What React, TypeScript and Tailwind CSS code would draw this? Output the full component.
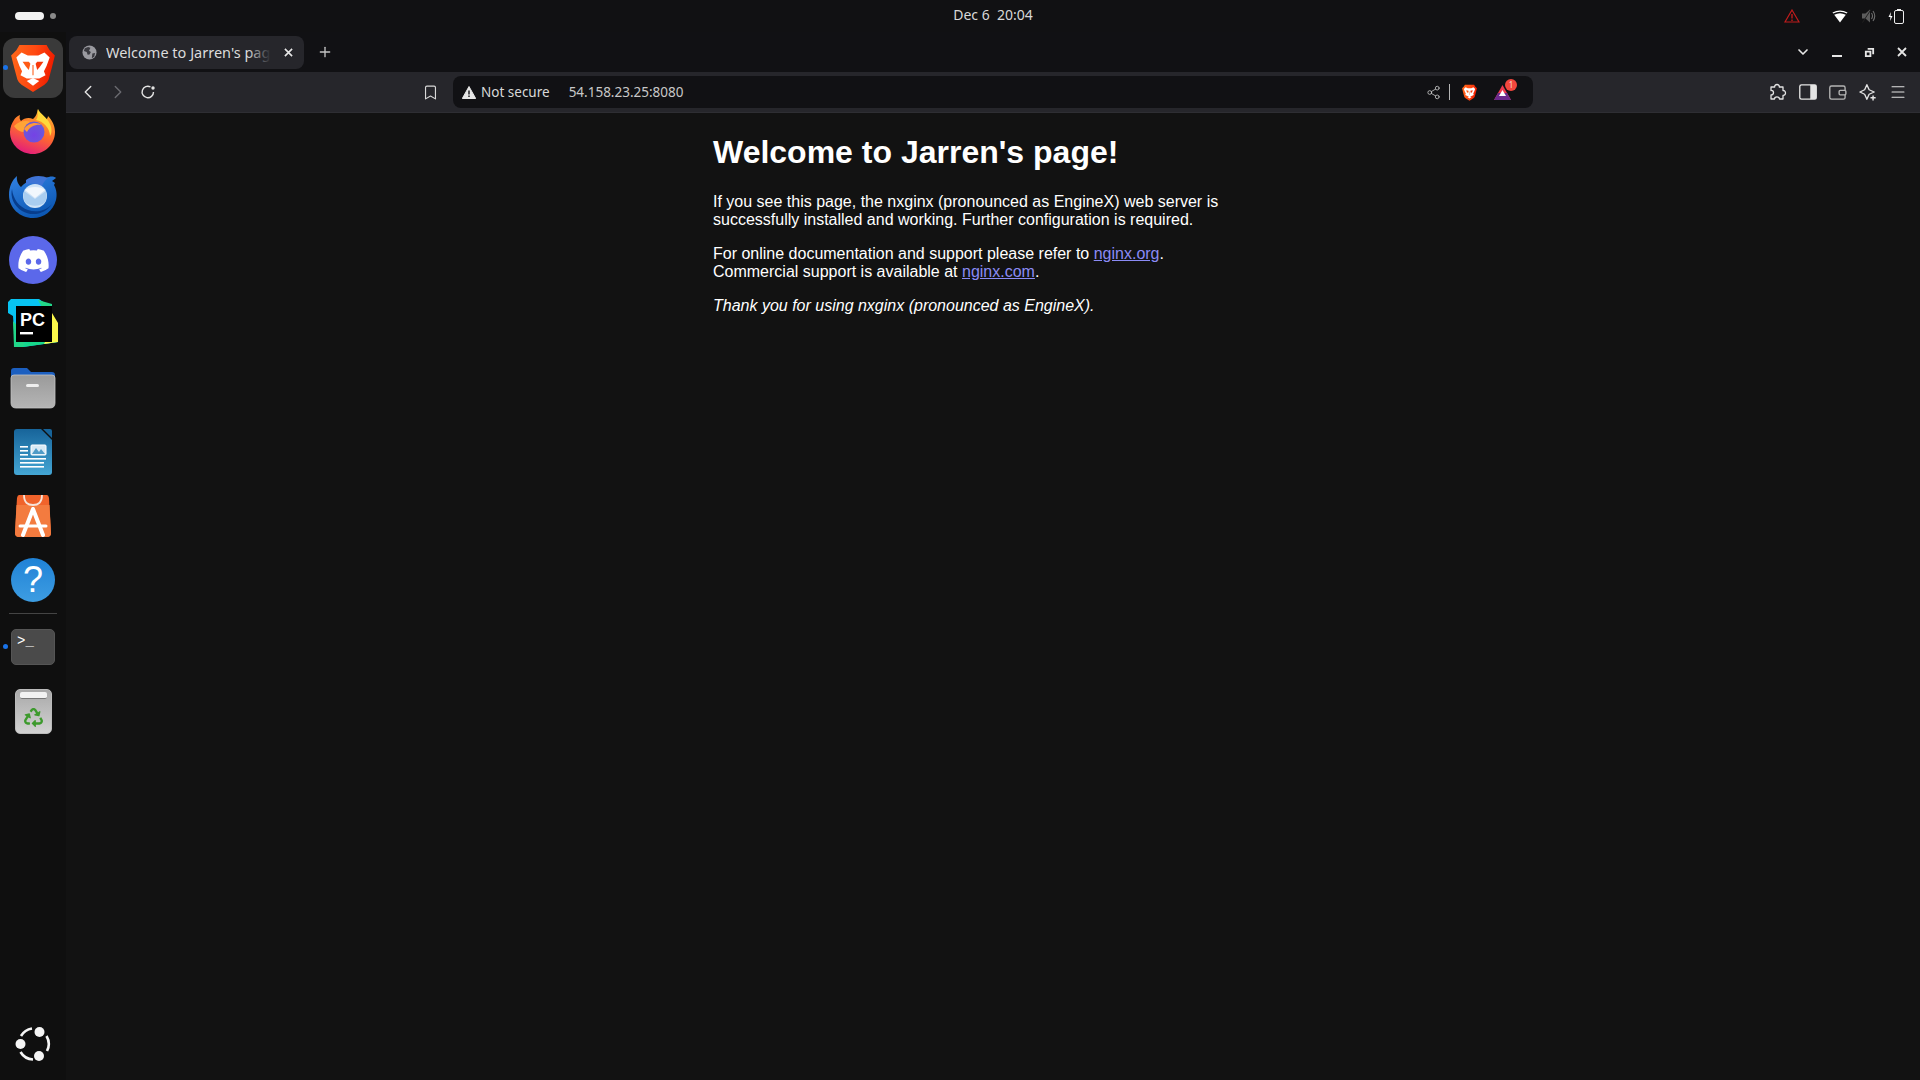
import { FaDiscord, FaRecycle } from 'react-icons/fa';
import { ChevronLeft, ChevronRight, Bookmark, Share2, Menu, Plus, ChevronDown } from 'lucide-react';

const uiFont = "font-['Noto_Sans',sans-serif]";

function BraveIcon({ size = 50 }: { size?: number }) {
  return (
    <svg width={size} height={size} viewBox="0 0 48 48">
      <defs>
        <linearGradient id="braveFill" x1="0" y1="0" x2="1" y2="0.2">
          <stop offset="0" stopColor="#ff6a1a" />
          <stop offset="0.55" stopColor="#ff4a12" />
          <stop offset="1" stopColor="#f01e00" />
        </linearGradient>
      </defs>
      <path d="M11 2H37L40 7L45 12L42 24L39 35Q38 38 35 40L24 47L13 40Q10 38 9 35L6 24L3 12L8 7Z" fill="url(#braveFill)" />
      <path d="M13 9L19 12H29L35 9L40 14L37 22L34.500 27L36 31L30 34H18L12 31L13.500 27L11 22L8 14Z" fill="#fff" />
      <path d="M14 18L20 18L21.500 20L20 26L17.500 23Z" fill="#ff5a14" />
      <path d="M34 18L28 18L26.500 20L28 26L30.500 23Z" fill="#f8380a" />
      <path d="M23.500 21H24.500V31H23.500Z" fill="#ff5a14" />
      <path d="M18 36.500L24 33.500L30 36.500L24 41Z" fill="#fff" />
    </svg>
  );
}

function FirefoxIcon() {
  return (
    <svg width={48} height={48} viewBox="0 0 48 48">
      <defs>
        <linearGradient id="ffBody" x1="0.7" y1="0" x2="0.3" y2="1">
          <stop offset="0" stopColor="#ffb52e" />
          <stop offset="0.5" stopColor="#ff6b2c" />
          <stop offset="1" stopColor="#e2197f" />
        </linearGradient>
        <radialGradient id="ffGlobe" cx="0.5" cy="0.65" r="0.6">
          <stop offset="0" stopColor="#7542e5" />
          <stop offset="1" stopColor="#6a5cd8" />
        </radialGradient>
      </defs>
      <path d="M29 1C29 6 33 8 37 12C39 10 39 8 39 8C44 13 46 19 46 24C46 36 36 46 24 46C12 46 1 37 1 24C1 19 3 15 5 12C6 10 8 8 11 7C10 10 11 12 12 13C15 10 20 9 24 11C28 8 28 4 29 1Z" fill="url(#ffBody)" />
      <path d="M29 1C31 6 38 9 41 16C43 20 43 25 41 28C41 20 34 13 27 12C30 8 28 4 29 1Z" fill="#ffd93b" />
      <path d="M5 18C10 13 16 12 22 14C17 16 16 20 16 24C11 24 8 22 5 18Z" fill="#ffa436" />
      <circle cx="25" cy="24" r="10.5" fill="url(#ffGlobe)" />
      <path d="M15 21C19 15 27 13 33 17C27 16 21 18 18 24Z" fill="#ff9a3a" />
    </svg>
  );
}

function ThunderbirdIcon() {
  return (
    <svg width={50} height={50} viewBox="0 0 50 50">
      <defs>
        <linearGradient id="tbBody" x1="0.2" y1="0" x2="0.7" y2="1">
          <stop offset="0" stopColor="#2f7fe0" />
          <stop offset="1" stopColor="#0a55b0" />
        </linearGradient>
      </defs>
      <path d="M9 5C8 10 11 14 13 16C20 8 30 5 38 7C42 5 46 5 48 7L44 10L47 12L46 14C49 19 49 25 48 29C45 40 36 47 25 47C12 47 1 37 1 24C1 16 4 9 9 5Z" fill="url(#tbBody)" />
      <path d="M18 9C24 4 34 4 40 7C36 10 33 15 34 18C30 13 24 11 18 14Z" fill="#3f74d6" />
      <path d="M4 18C5 28 11 36 20 39C28 42 38 40 44 33C38 43 24 46 14 40C6 35 2 26 4 18Z" fill="#073d8c" />
      <circle cx="27" cy="25" r="12" fill="#cfe3f7" />
      <path d="M16 20L27 28L38 20C39 23 39 27 37 31C33 36 21 36 17 31C15 28 15 23 16 20Z" fill="#a9cdf0" />
      <path d="M17 19C21 15 33 15 37 19L27 27Z" fill="#f2f7fd" />
    </svg>
  );
}

function PyCharmIcon() {
  return (
    <svg width={50} height={50} viewBox="0 0 50 50">
      <defs>
        <linearGradient id="pcA" x1="0" y1="0" x2="1" y2="1">
          <stop offset="0" stopColor="#07c3f2" />
          <stop offset="0.5" stopColor="#14d98a" />
          <stop offset="1" stopColor="#21d789" />
        </linearGradient>
      </defs>
      <path d="M3 0H31L38 5H44V17L50 25V43L15 48H7L5 17L0 14V3Z" fill="#07c3f2" />
      <path d="M5 22L22 40L15 48H6Z" fill="#21d789" />
      <path d="M22 30L50 25V43L15 48Z" fill="url(#pcA)" />
      <path d="M44 14L50 24V43L36 45L44 30Z" fill="#fcf84a" />
      <path d="M30 1L44 5V17L36 12Z" fill="#21d789" />
      <rect x="8" y="7" width="36" height="36" fill="#000" />
      <text x="12" y="27" fontFamily="'Liberation Sans',sans-serif" fontWeight="700" fontSize="18" fill="#fff">PC</text>
      <rect x="12" y="33" width="13" height="2.4" fill="#fff" />
    </svg>
  );
}

function FilesIcon() {
  return (
    <svg width={46} height={42} viewBox="0 0 46 42">
      <defs>
        <linearGradient id="filesBody" x1="0" y1="0" x2="0" y2="1">
          <stop offset="0" stopColor="#9a9a9a" />
          <stop offset="1" stopColor="#b5b5b5" />
        </linearGradient>
      </defs>
      <path d="M1 4Q1 1 4 1H17L21 5H42Q45 5 45 8V20H1Z" fill="#1c5fc0" />
      <path d="M1 11Q1 8 4 8H42Q45 8 45 11V36Q45 41 40 41H6Q1 41 1 36Z" fill="url(#filesBody)" stroke="#c4c4c4" strokeWidth="0.8" />
      <rect x="16" y="17" width="13" height="3" rx="1.5" fill="#eee" />
    </svg>
  );
}

function WriterIcon() {
  return (
    <svg width={38} height={46} viewBox="0 0 38 46">
      <defs>
        <linearGradient id="writerBody" x1="0" y1="0" x2="0" y2="1">
          <stop offset="0" stopColor="#17649a" />
          <stop offset="1" stopColor="#44a6d4" />
        </linearGradient>
      </defs>
      <path d="M3 0H27L38 11V43Q38 46 35 46H3Q0 46 0 43V3Q0 0 3 0Z" fill="url(#writerBody)" />
      <path d="M29 0H36Q38 0 38 2V9Z" fill="#17649a" />
      <g fill="#fff">
        <rect x="6" y="17" width="8" height="1.6" />
        <rect x="6" y="21" width="8" height="1.6" />
        <rect x="6" y="25" width="8" height="1.6" />
        <rect x="6" y="29" width="26" height="1.6" />
        <rect x="6" y="33" width="24" height="1.6" />
        <rect x="6" y="37" width="24" height="1.6" />
      </g>
      <rect x="17" y="16" width="15" height="10" rx="1" fill="#d7e9f4" stroke="#fff" strokeWidth="1" />
      <path d="M18 25L22 19L25 23L27 20L31 25Z" fill="#4f9bc7" />
    </svg>
  );
}

function StoreIcon() {
  return (
    <svg width={36} height={42} viewBox="0 0 36 42">
      <path d="M4 0H32Q33.500 0 34 3L36 38Q36 42 32 42H4Q0 42 0 38L2 3Q2.500 0 4 0Z" fill="#f0632b" />
      <path d="M1.500 10H34.500L36 38Q36 42 32 42H4Q0 42 0 38Z" fill="#f37b3f" />
      <path d="M9 0C9 8 13 10 18 10C23 10 27 8 27 0" fill="none" stroke="#f6e3d8" strokeWidth="1.800" />
      <path d="M18 14L8 40M18 14L28 40" stroke="#fff" strokeWidth="4" strokeLinecap="round" fill="none" />
      <path d="M5 31H31" stroke="#fff" strokeWidth="3" strokeLinecap="round" />
    </svg>
  );
}

function TerminalIcon() {
  return (
    <div className="w-[44px] h-[36px] rounded-[5px] bg-[#4a4a4a] border border-[#555] px-[5px] pt-[2px] font-['Liberation_Mono',monospace] text-[14px] leading-[18px] text-white">
      &gt;_
    </div>
  );
}

function TrashIcon() {
  return (
    <div className="relative w-[37px] h-[45px] rounded-[5px] bg-gradient-to-b from-[#a9a9a9] to-[#d2d2d2] border border-[#bbb] flex items-end justify-center pb-[6px]">
      <div className="absolute top-[2px] left-[4px] w-[27px] h-[7px] bg-[#f2f2f2] rounded-[2px] border-b border-[#777]" />
      <FaRecycle className="text-[#3d9a2d]" size={19} />
    </div>
  );
}

function UbuntuIcon() {
  return (
    <svg width={36} height={36} viewBox="0 0 36 36">
      <path d="M6 10A15.500 15.500 0 0 1 17 2.500" fill="none" stroke="#f5f5f5" strokeWidth="2.600" />
      <path d="M31.500 10A15.500 15.500 0 0 1 32 25" fill="none" stroke="#f5f5f5" strokeWidth="2.600" />
      <path d="M5.500 26A15.500 15.500 0 0 0 18 33.500" fill="none" stroke="#f5f5f5" strokeWidth="2.600" />
      <circle cx="24.500" cy="6" r="5" fill="#f5f5f5" />
      <circle cx="5.500" cy="18" r="5" fill="#f5f5f5" />
      <circle cx="24" cy="30" r="5" fill="#f5f5f5" />
    </svg>
  );
}

function DockItem({ children, active, running }: { children: React.ReactNode; active?: boolean; running?: boolean }) {
  return (
    <div className="relative h-[64px] w-[66px] flex items-center justify-center shrink-0">
      {active && <div className="absolute left-[3px] top-[2px] w-[60px] h-[60px] rounded-[12px] bg-[#3a3a3a]" />}
      {running && <div className="absolute left-[3px] top-[29px] w-[5px] h-[5px] rounded-full bg-[#1a73e8]" />}
      <div className="relative flex items-center justify-center">{children}</div>
    </div>
  );
}

function Dock() {
  return (
    <aside className="w-[66px] shrink-0 flex flex-col pt-[4px] pb-[4px] bg-[#0f0f0f]">
      <DockItem active running><BraveIcon /></DockItem>
      <DockItem><FirefoxIcon /></DockItem>
      <DockItem><ThunderbirdIcon /></DockItem>
      <DockItem>
        <div className="w-[48px] h-[48px] rounded-full bg-[#5b68ea] flex items-center justify-center">
          <FaDiscord className="text-white" size={33} />
        </div>
      </DockItem>
      <DockItem><PyCharmIcon /></DockItem>
      <DockItem><FilesIcon /></DockItem>
      <DockItem><WriterIcon /></DockItem>
      <DockItem><StoreIcon /></DockItem>
      <DockItem>
        <div className="w-[44px] h-[44px] rounded-full bg-gradient-to-b from-[#1f82d6] to-[#3d9de2] flex items-center justify-center text-white text-[36px] leading-none font-['Liberation_Sans',sans-serif]">
          ?
        </div>
      </DockItem>
      <div className="h-[1px] mx-[9px] mt-[1px] mb-[1px] bg-[#444] shrink-0" />
      <DockItem running><TerminalIcon /></DockItem>
      <DockItem><TrashIcon /></DockItem>
      <div className="mt-auto">
        <DockItem><UbuntuIcon /></DockItem>
      </div>
    </aside>
  );
}

function TopBar() {
  return (
    <header className={`h-[32px] shrink-0 grid grid-cols-[1fr_auto_1fr] items-center bg-[#111113] text-[14px] text-[#d8d8d8] ${uiFont}`}>
      <div className="flex items-center gap-[6px] pl-[15px]">
        <span className="w-[29px] h-[8px] rounded-full bg-[#f2f2f2]" />
        <span className="w-[6px] h-[6px] rounded-full bg-[#8a8a8a]" />
      </div>
      <div className="pl-[66px] pb-[3px] whitespace-pre">Dec 6  20:04</div>
      <div className="flex items-center justify-end pr-[16px]">
        <svg width={16} height={14} viewBox="0 0 16 14" className="mr-[32px]">
          <path d="M8 1L15 13H1Z" fill="none" stroke="#c01c1c" strokeWidth="1.200" />
          <path d="M8 5V9.500M8 10.500V12" stroke="#c01c1c" strokeWidth="1.400" />
        </svg>
        <svg width={16} height={13} viewBox="0 0 16 13" className="mr-[13px]">
          <path d="M0.500 2.500Q8 -1.500 15.500 2.500L14.800 3.500Q8 0 1.200 3.500Z" fill="#fff" />
          <path d="M2.200 4.800Q8 1.600 13.800 4.800L8 12.500Z" fill="#fff" />
        </svg>
        <svg width={15} height={14} viewBox="0 0 15 14" className="mr-[12px]">
          <path d="M1 4.500H4.500L9 0.500V13.500L4.500 9.500H1Z" fill="#5c5c5c" />
          <path d="M10.500 4Q12.500 7 10.500 10M12 2Q15.500 7 12 12" fill="none" stroke="#6e6e6e" strokeWidth="1.100" />
          <path d="M1.500 13.500L10 0.500" stroke="#222" strokeWidth="1" />
        </svg>
        <svg width={16} height={15} viewBox="0 0 16 15">
          <path d="M3 3L0.500 8H2.500L2 12L4.500 7H2.500Z" fill="#fff" />
          <rect x="6.500" y="1.500" width="9" height="13" rx="1.500" fill="none" stroke="#eee" strokeWidth="1" />
          <rect x="9" y="0" width="4" height="1.500" fill="#eee" />
        </svg>
      </div>
    </header>
  );
}

function WinClose({ size }: { size: number }) {
  return (
    <svg width={size} height={size} viewBox="0 0 10 10">
      <path d="M1 1L9 9M9 1L1 9" stroke="#e6e6e6" strokeWidth="1.800" />
    </svg>
  );
}

function TabStrip() {
  return (
    <div className={`h-[40px] shrink-0 flex items-center bg-[#111114] pl-[3px] ${uiFont}`}>
      <div className="relative w-[235px] h-[33px] rounded-[8px] bg-[#26262b] flex items-center pl-[13px] pr-[11px] overflow-hidden">
        <svg width={15} height={15} viewBox="0 0 16 16" className="shrink-0">
          <circle cx="8" cy="8" r="7.500" fill="#9a9aa0" />
          <path d="M3 3.500L6.500 2L9 3L7.500 6L9.500 7.500L8 10L6 10.500L5 7.500L2 6.500ZM11 9L14 8.500L13 12.500L10.500 14Z" fill="#3a3a40" />
        </svg>
        <span className="ml-[9px] mt-[1px] w-[166px] overflow-hidden whitespace-nowrap text-[14.500px] text-[#dcdcdc]">Welcome to Jarren's page!</span>
        <div className="absolute left-[178px] top-0 w-[28px] h-full bg-gradient-to-l from-[#26262b] from-[15%] to-transparent" />
        <span className="ml-auto flex"><WinClose size={9} /></span>
      </div>
      <Plus className="ml-[13px] text-[#c4c4c4]" size={16} strokeWidth={2} />
      <div className="ml-auto flex items-center text-[#e6e6e6] pr-[13px]">
        <ChevronDown size={16} strokeWidth={2.500} />
        <span className="ml-[21px] w-[10px] h-[2px] mt-[7px] bg-[#e6e6e6]" />
        <svg width={11} height={11} viewBox="0 0 12 12" className="ml-[22px]">
          <path d="M4 1H11V8H9V3H4ZM1 4H8V11H1Z" fill="#e6e6e6" />
          <rect x="3" y="6" width="3" height="3" fill="#111114" />
        </svg>
        <span className="ml-[22px] flex"><WinClose size={10} /></span>
      </div>
    </div>
  );
}

function Toolbar() {
  return (
    <div className={`h-[41px] shrink-0 flex items-center bg-[#26262b] border-b border-[#2e2e33] ${uiFont}`}>
      <ChevronLeft className="ml-[11px] text-[#e4e4e4]" size={22} strokeWidth={1.500} />
      <ChevronRight className="ml-[8px] text-[#6a6a70]" size={22} strokeWidth={1.500} />
      <svg width={16} height={16} viewBox="0 0 16 16" className="ml-[11px]">
        <path d="M13.500 8A5.700 5.700 0 1 1 10.500 3" fill="none" stroke="#e4e4e4" strokeWidth="1.400" />
        <circle cx="13" cy="4" r="1.700" fill="#e4e4e4" />
      </svg>
      <Bookmark className="ml-[266px] text-[#d8d8d8]" size={17} strokeWidth={1.600} />
      <div className="ml-[14px] w-[1080px] h-[32px] rounded-[8px] bg-[#111114] flex items-center pl-[9px] pr-[22px] text-[13.500px]">
        <svg width={14} height={13} viewBox="0 0 14 13">
          <path d="M7 0.500L13.700 12.500H0.300Z" fill="#e6e6e6" stroke="#e6e6e6" strokeLinejoin="round" />
          <path d="M7 4.500V8.500M7 9.500V11" stroke="#111114" strokeWidth="1.400" />
        </svg>
        <span className="ml-[5px] text-[#d8d8d8]">Not secure</span>
        <span className="ml-[19px] text-[#c8c8c8]">54.158.23.25:8080</span>
        <Share2 className="ml-auto text-[#c8c8c8]" size={15} strokeWidth={1.300} />
        <span className="ml-[8px] w-[1px] h-[16px] bg-[#b5b5b5]" />
        <span className="ml-[11px] flex"><BraveIcon size={17} /></span>
        <span className="relative ml-[16px] flex">
          <svg width={17} height={15} viewBox="0 0 17 15">
            <path d="M8.500 0L17 15H0Z" fill="#ee3a4e" />
            <path d="M17 15H0L4 8H13Z" fill="#6b2a8c" />
            <path d="M8.500 5L12 11H5Z" fill="#fff" />
          </svg>
          <span className="absolute left-[11px] top-[-6px] w-[12px] h-[12px] rounded-full bg-[#f4473d] text-[8px] leading-[12px] text-center text-[#f8d8d4]">1</span>
        </span>
      </div>
      <div className="ml-auto flex items-center gap-[12px] pr-[13px] text-[#e4e4e4]">
        <svg width={18} height={18} viewBox="0 0 18 18">
          <path d="M8 1.500C9.500 1.500 10.500 2.500 10.300 4H14V7.500C15.500 7.300 16.500 8.500 16.500 10C16.500 11.500 15.500 12.500 14 12.300V16H10.500C10.500 14.500 9.500 13.800 8 13.800C6.500 13.800 5.500 14.500 5.500 16H2V12C3.500 12 4.500 11 4.500 9.500C4.500 8 3.500 7.300 2 7.500V4H5.700C5.500 2.500 6.500 1.500 8 1.500Z" fill="none" stroke="#e4e4e4" strokeWidth="1.300" strokeLinejoin="round" />
        </svg>
        <svg width={18} height={16} viewBox="0 0 16 14">
          <rect x="0.700" y="0.700" width="14.600" height="12.600" rx="1.500" fill="none" stroke="#e4e4e4" strokeWidth="1.200" />
          <rect x="10" y="0.700" width="5.300" height="12.600" fill="#e4e4e4" />
        </svg>
        <svg width={18} height={16} viewBox="0 0 16 14">
          <rect x="0.700" y="1.700" width="13.600" height="11.600" rx="1.500" fill="none" stroke="#b5b5b5" strokeWidth="1.200" />
          <rect x="9" y="5.500" width="6" height="4" rx="1" fill="#26262b" stroke="#b5b5b5" strokeWidth="1.200" />
        </svg>
        <svg width={18} height={18} viewBox="0 0 16 16">
          <path d="M7 1.500L9 6L13.500 8L9 10L7 14.500L5 10L0.800 8L5 6Z" fill="none" stroke="#e4e4e4" strokeWidth="1.200" strokeLinejoin="round" />
          <path d="M12.500 11V15.500M10.200 13.200H14.800" stroke="#e4e4e4" strokeWidth="1.300" />
        </svg>
        <Menu size={18} strokeWidth={1.400} />
      </div>
    </div>
  );
}

function NginxPage() {
  return (
    <main className="flex-1 bg-[#121212] text-white font-['Liberation_Sans',sans-serif] text-[16px] leading-[18px]">
      <div className="w-[560px] mx-auto">
        <h1 className="pt-[21.440px] mb-[21.440px] text-[32px] leading-[37px] font-bold">Welcome to Jarren's page!</h1>
        <p>If you see this page, the nxginx (pronounced as EngineX) web server is successfully installed and working. Further configuration is required.</p>
        <p className="mt-[16px]">
          For online documentation and support please refer to <a className="underline text-[#8b8bf5]" href="#">nginx.org</a>.<br />
          Commercial support is available at <a className="underline text-[#8b8bf5]" href="#">nginx.com</a>.
        </p>
        <p className="mt-[16px] italic">Thank you for using nxginx (pronounced as EngineX).</p>
      </div>
    </main>
  );
}

export default function App() {
  return (
    <div className="w-[1920px] h-[1080px] flex flex-col overflow-hidden bg-[#111113]">
      <TopBar />
      <div className="flex-1 flex min-h-0">
        <Dock />
        <div className="flex-1 flex flex-col min-w-0">
          <TabStrip />
          <Toolbar />
          <NginxPage />
        </div>
      </div>
    </div>
  );
}
